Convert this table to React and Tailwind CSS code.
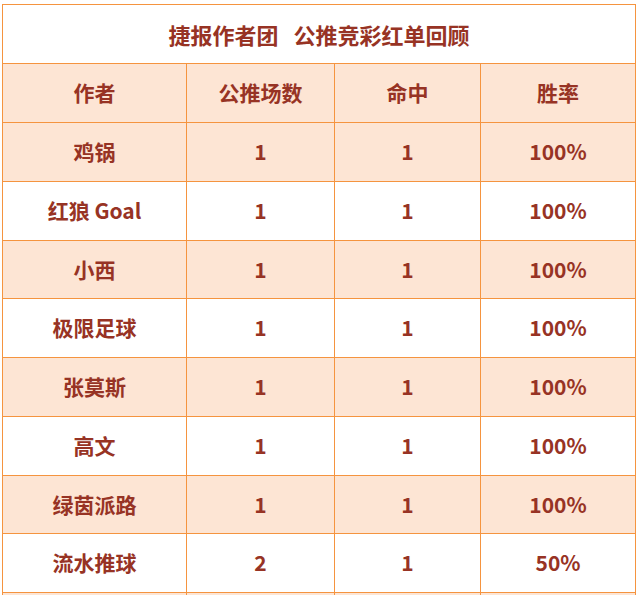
const rows = [
  ["鸡锅", "1", "1", "100%"],
  ["红狼 Goal", "1", "1", "100%"],
  ["小西", "1", "1", "100%"],
  ["极限足球", "1", "1", "100%"],
  ["张莫斯", "1", "1", "100%"],
  ["高文", "1", "1", "100%"],
  ["绿茵派路", "1", "1", "100%"],
  ["流水推球", "2", "1", "50%"],
  ["", "", "", ""],
];

const cell = "border border-[#f5943f] p-0 text-center align-middle";

export default function App() {
  return (
    <div className="bg-white pt-1 pl-[2px] w-[637px] h-[595px] overflow-hidden font-['Noto_Sans_CJK_SC','Noto_Sans',sans-serif] font-bold text-[21px] text-[#973324]">
      <table className="border-collapse w-[633px] table-fixed">
        <colgroup>
          <col className="w-[184px]" />
          <col className="w-[148px]" />
          <col className="w-[146px]" />
          <col className="w-[155px]" />
        </colgroup>
        <tbody>
          <tr className="h-[59px]">
            <td colSpan={4} className={`${cell} bg-white text-[22px]`}>
              捷报作者团&nbsp;&nbsp;&nbsp;公推竞彩红单回顾
            </td>
          </tr>
          <tr className="h-[59px] bg-[#fde5d4]">
            <td className={cell}>作者</td>
            <td className={cell}>公推场数</td>
            <td className={cell}>命中</td>
            <td className={cell}>胜率</td>
          </tr>
          {rows.map((r, i) => (
            <tr
              key={i}
              className={`h-[58.75px] ${i % 2 === 0 ? "bg-[#fde5d4]" : "bg-white"}`}
            >
              {r.map((v, j) => (
                <td key={j} className={cell}>
                  {v}
                </td>
              ))}
            </tr>
          ))}
        </tbody>
      </table>
    </div>
  );
}
